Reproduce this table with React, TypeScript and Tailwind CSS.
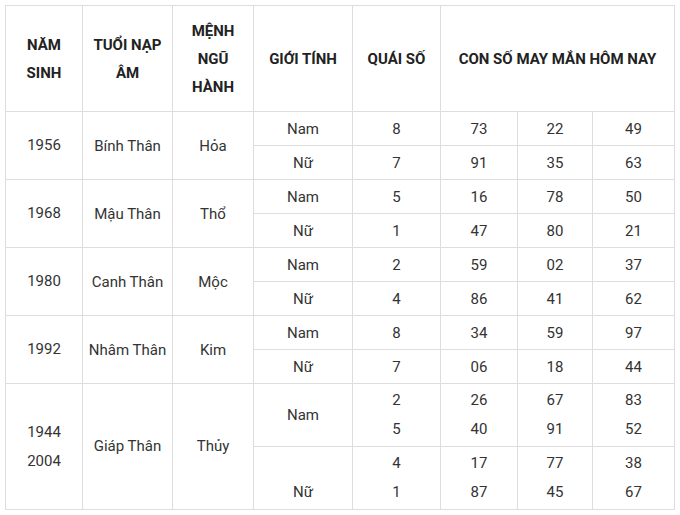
import React from 'react'

type Row = {
  year: string[]
  napAm: string
  menh: string
  groups: { gender: string[]; quai: string[]; nums: string[][] }[]
}

const rows: Row[] = [
  {
    year: ['1956'],
    napAm: 'Bính Thân',
    menh: 'Hỏa',
    groups: [
      { gender: ['Nam'], quai: ['8'], nums: [['73', '22', '49']] },
      { gender: ['Nữ'], quai: ['7'], nums: [['91', '35', '63']] },
    ],
  },
  {
    year: ['1968'],
    napAm: 'Mậu Thân',
    menh: 'Thổ',
    groups: [
      { gender: ['Nam'], quai: ['5'], nums: [['16', '78', '50']] },
      { gender: ['Nữ'], quai: ['1'], nums: [['47', '80', '21']] },
    ],
  },
  {
    year: ['1980'],
    napAm: 'Canh Thân',
    menh: 'Mộc',
    groups: [
      { gender: ['Nam'], quai: ['2'], nums: [['59', '02', '37']] },
      { gender: ['Nữ'], quai: ['4'], nums: [['86', '41', '62']] },
    ],
  },
  {
    year: ['1992'],
    napAm: 'Nhâm Thân',
    menh: 'Kim',
    groups: [
      { gender: ['Nam'], quai: ['8'], nums: [['34', '59', '97']] },
      { gender: ['Nữ'], quai: ['7'], nums: [['06', '18', '44']] },
    ],
  },
  {
    year: ['1944', '2004'],
    napAm: 'Giáp Thân',
    menh: 'Thủy',
    groups: [
      { gender: ['Nam'], quai: ['2', '5'], nums: [['26', '67', '83'], ['40', '91', '52']] },
      { gender: ['\u00a0', 'Nữ'], quai: ['4', '1'], nums: [['17', '77', '38'], ['87', '45', '67']] },
    ],
  },
]

function Lines({ items }: { items: string[] }) {
  return (
    <>
      {items.map((t, i) => (
        <div key={i}>{t}</div>
      ))}
    </>
  )
}

export default function App() {
  const cell = 'border border-[#dddddd] text-center align-middle p-0'

  return (
    <div className="w-[680px] h-[515px] bg-white pt-[5px] pl-[5px]" style={{ fontFamily: 'Roboto, "Liberation Sans", sans-serif' }}>
      <table className="border-collapse table-fixed w-[669px] text-[15px] text-[#333333]">
        <colgroup>
          <col className="w-[77px]" />
          <col className="w-[90px]" />
          <col className="w-[81px]" />
          <col className="w-[99px]" />
          <col className="w-[88px]" />
          <col className="w-[77px]" />
          <col className="w-[75px]" />
          <col className="w-[82px]" />
        </colgroup>
        <thead>
          <tr className="h-[106px] font-bold text-[#222222] leading-[28px]">
            <th className={cell}>NĂM<br />SINH</th>
            <th className={cell}>TUỔI NẠP<br />ÂM</th>
            <th className={cell}>MỆNH<br />NGŨ<br />HÀNH</th>
            <th className={cell}>GIỚI TÍNH</th>
            <th className={cell}>QUÁI SỐ</th>
            <th className={cell} colSpan={3}>CON SỐ MAY MẮN HÔM NAY</th>
          </tr>
        </thead>
        <tbody>
          {rows.map((row) =>
            row.groups.map((g, gi) => {
              const multi = g.quai.length > 1
              return (
                <tr key={row.napAm + gi} className={multi ? 'h-[63px] leading-[29px]' : 'h-[34px] leading-[20px]'}>
                  {gi === 0 && (
                    <>
                      <td className={cell} rowSpan={row.groups.length}>
                        <div className="leading-[29px]"><Lines items={row.year} /></div>
                      </td>
                      <td className={cell} rowSpan={row.groups.length}>{row.napAm}</td>
                      <td className={cell} rowSpan={row.groups.length}>{row.menh}</td>
                    </>
                  )}
                  <td className={cell}><Lines items={g.gender} /></td>
                  <td className={cell}><Lines items={g.quai} /></td>
                  {[0, 1, 2].map((c) => (
                    <td key={c} className={cell}>
                      <Lines items={g.nums.map((n) => n[c])} />
                    </td>
                  ))}
                </tr>
              )
            })
          )}
        </tbody>
      </table>
    </div>
  )
}
